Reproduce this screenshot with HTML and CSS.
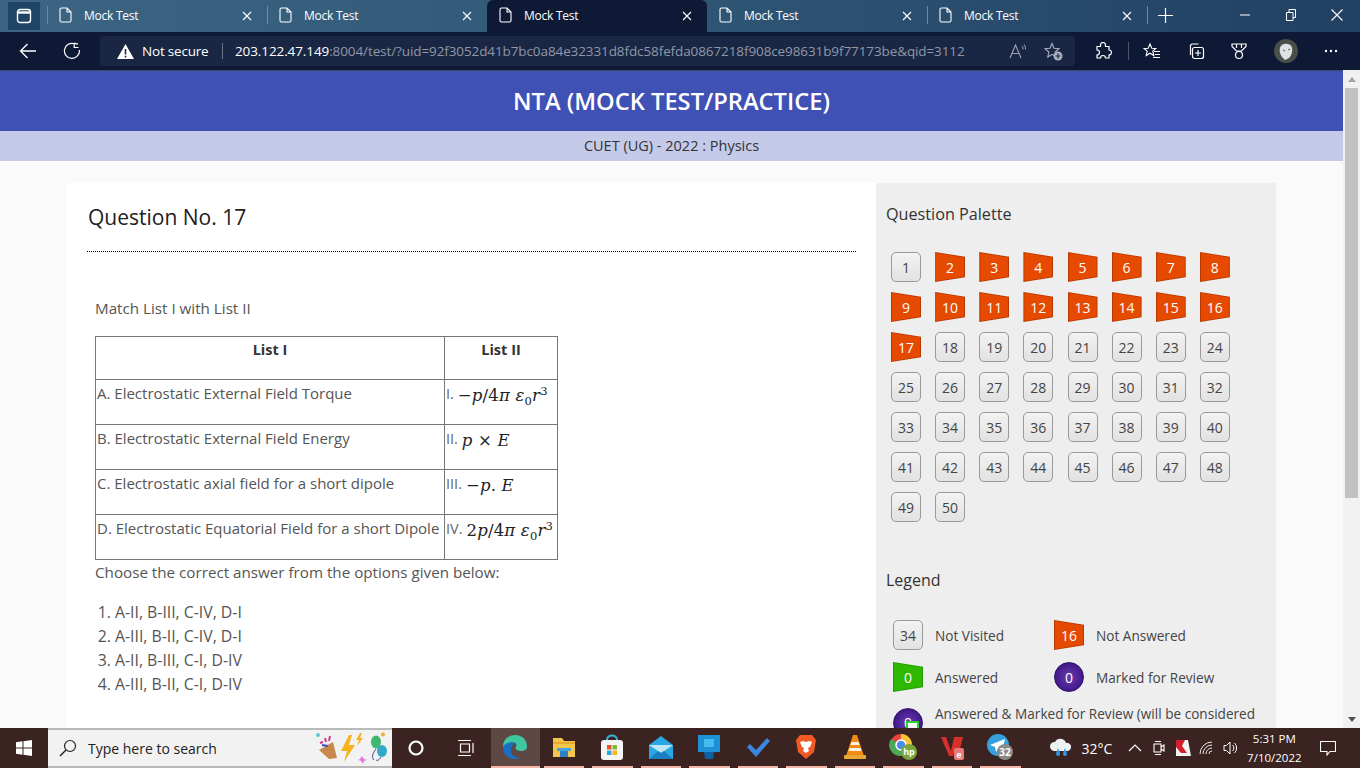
FILE: index.html
```html
<!DOCTYPE html>
<html lang="en">
<head>
<meta charset="utf-8">
<title>Mock Test</title>
<link rel="stylesheet" href="styles.css">
</head>
<body>
<div class="window">
  <div class="tabstrip">
    <div class="tab-btn"><svg width="16" height="16" viewBox="0 0 16 16"><rect x="1.5" y="1.5" width="13" height="13" rx="2.5" fill="none" stroke="#fff" stroke-width="1.4"/><path d="M1.5 4.5h13" stroke="#fff" stroke-width="2.4"/></svg></div>
    <div class="tab">
      <svg class="doc" width="13" height="16" viewBox="0 0 13 16"><path d="M1 2.5a1.5 1.5 0 0 1 1.5-1.5H8l4 4v8.500a1.500 1.500 0 0 1-1.500 1.500h-8A1.500 1.500 0 0 1 1 13.500zM8 1v4h4" fill="none" stroke="#fff" stroke-width="1.100"/></svg>
      <span class="tab-title">Mock Test</span>
      <svg class="close" width="10" height="10" viewBox="0 0 10 10"><path d="M1 1l8 8M9 1l-8 8" stroke="#fff" stroke-width="1.100"/></svg>
    </div>
    <div class="tab">
      <svg class="doc" width="13" height="16" viewBox="0 0 13 16"><path d="M1 2.5a1.5 1.5 0 0 1 1.5-1.5H8l4 4v8.500a1.500 1.500 0 0 1-1.500 1.500h-8A1.500 1.500 0 0 1 1 13.500zM8 1v4h4" fill="none" stroke="#fff" stroke-width="1.100"/></svg>
      <span class="tab-title">Mock Test</span>
      <svg class="close" width="10" height="10" viewBox="0 0 10 10"><path d="M1 1l8 8M9 1l-8 8" stroke="#fff" stroke-width="1.100"/></svg>
    </div>
    <div class="tab tab-active">
      <svg class="doc" width="13" height="16" viewBox="0 0 13 16"><path d="M1 2.5a1.5 1.5 0 0 1 1.5-1.5H8l4 4v8.500a1.500 1.500 0 0 1-1.500 1.500h-8A1.500 1.500 0 0 1 1 13.500zM8 1v4h4" fill="none" stroke="#fff" stroke-width="1.100"/></svg>
      <span class="tab-title">Mock Test</span>
      <svg class="close" width="10" height="10" viewBox="0 0 10 10"><path d="M1 1l8 8M9 1l-8 8" stroke="#fff" stroke-width="1.100"/></svg>
    </div>
    <div class="tab tab-nosep">
      <svg class="doc" width="13" height="16" viewBox="0 0 13 16"><path d="M1 2.5a1.5 1.5 0 0 1 1.5-1.5H8l4 4v8.500a1.500 1.500 0 0 1-1.500 1.500h-8A1.500 1.500 0 0 1 1 13.500zM8 1v4h4" fill="none" stroke="#fff" stroke-width="1.100"/></svg>
      <span class="tab-title">Mock Test</span>
      <svg class="close" width="10" height="10" viewBox="0 0 10 10"><path d="M1 1l8 8M9 1l-8 8" stroke="#fff" stroke-width="1.100"/></svg>
    </div>
    <div class="tab">
      <svg class="doc" width="13" height="16" viewBox="0 0 13 16"><path d="M1 2.5a1.5 1.5 0 0 1 1.5-1.5H8l4 4v8.500a1.500 1.500 0 0 1-1.500 1.500h-8A1.500 1.500 0 0 1 1 13.500zM8 1v4h4" fill="none" stroke="#fff" stroke-width="1.100"/></svg>
      <span class="tab-title">Mock Test</span>
      <svg class="close" width="10" height="10" viewBox="0 0 10 10"><path d="M1 1l8 8M9 1l-8 8" stroke="#fff" stroke-width="1.100"/></svg>
    </div>
    <div class="new-tab"><svg width="15" height="15" viewBox="0 0 15 15"><path d="M7.500 0v15M0 7.500h15" stroke="#fff" stroke-width="1.200"/></svg></div>
    <div class="win-controls">
      <svg width="10" height="10" viewBox="0 0 10 10"><path d="M0 5h10" stroke="#fff" stroke-width="1"/></svg>
      <svg width="10" height="12" viewBox="0 0 10 12"><path d="M.5 3.500h6.500v8H.5zM3 3.500V.5h6.500v8H7" fill="none" stroke="#fff" stroke-width="1"/></svg>
      <svg width="12" height="12" viewBox="0 0 12 12"><path d="M.5.5l11 11M11.500.5l-11 11" stroke="#fff" stroke-width="1.100"/></svg>
    </div>
  </div>

  <div class="toolbar">
    <div class="nav-btn"><svg width="18" height="16" viewBox="0 0 18 16"><path d="M17 8H1.500M8.500 1l-7 7 7 7" fill="none" stroke="#fff" stroke-width="1.300"/></svg></div>
    <div class="nav-btn nav-reload"><svg width="18" height="18" viewBox="0 0 18 18"><path d="M11.500 1.800A7.500 7.500 0 1 0 16.400 8M11.200 1.200l3.800 1M11.200 1.200v4.300h4.300" fill="none" stroke="#fff" stroke-width="1.200"/></svg></div>
    <div class="address">
      <svg class="warn" width="17" height="15" viewBox="0 0 17 15"><path d="M8.500 0L17 15H0z" fill="#fff"/><path d="M8.500 5v5.500M8.500 11.800v1.700" stroke="#1a2744" stroke-width="1.600"/></svg>
      <span class="secure">Not secure</span>
      <span class="addr-sep"></span>
      <span class="url"><span class="url-host">203.122.47.149</span>:8004/test/?uid=92f3052d41b7bc0a84e32331d8fdc58fefda0867218f908ce98631b9f77173be&amp;qid=3112</span>
      <svg class="addr-read" width="18" height="16" viewBox="0 0 18 16"><path d="M1 15L6.500 2 12 15M3 10.500h7" fill="none" stroke="#9aa3b2" stroke-width="1.100"/><path d="M13 3a4 4 0 0 1 1 3.500M15 1.500a6 6 0 0 1 1.500 5" fill="none" stroke="#9aa3b2"/></svg>
      <svg class="addr-fav" width="19" height="19" viewBox="0 0 19 19"><path d="M8 1.500l2 4.700 5 .5-3.800 3.300 1 5-4.200-2.600L3.800 15l1-5L1 6.700l5-.5z" fill="none" stroke="#a9b1be" stroke-width="1.100"/><circle cx="14" cy="14" r="4.500" fill="#a9b1be"/><path d="M14 11.500v5M11.500 14h5" stroke="#1a2744" stroke-width="1.200"/></svg>
    </div>
    <div class="tools">
      <svg class="tool-ext" width="18" height="18" viewBox="0 0 18 18"><path d="M6.500 3a2.500 2.500 0 0 1 5 0v1.500H15V8a2.500 2.500 0 0 1 0 5v3h-3.500a2.500 2.500 0 0 0-5 0H3v-3a2.500 2.500 0 0 0 0-5V4.500h3.500z" fill="none" stroke="#fff" stroke-width="1.200"/></svg>
      <span class="tool-sep"></span>
      <svg class="tool-fav" width="18" height="18" viewBox="0 0 18 18"><path d="M7 2l1.800 4.200 4 .3-3 2.700 1 4.300L7 11.200 3.200 13.500l1-4.300-3-2.700 4-.3zM11 9.500h6M12 12.500h5M10 15.500h7" fill="none" stroke="#fff" stroke-width="1.100"/></svg>
      <svg class="tool-coll" width="18" height="18" viewBox="0 0 18 18"><rect x="5.500" y="5.500" width="11" height="11" rx="2" fill="none" stroke="#fff" stroke-width="1.200"/><path d="M11 8v6M8 11h6M3.500 13V4.500a2 2 0 0 1 2-2.500h6" fill="none" stroke="#fff" stroke-width="1.200"/></svg>
      <svg class="tool-medal" width="18" height="18" viewBox="0 0 18 18"><path d="M2 2h14v2.500L11.500 9h-5L2 4.500zM6.500 2v4M11.500 2v4" fill="none" stroke="#fff" stroke-width="1.200"/><circle cx="9" cy="13" r="3.500" fill="none" stroke="#fff" stroke-width="1.200"/></svg>
      <svg class="tool-avatar" width="24" height="24" viewBox="0 0 24 24"><circle cx="12" cy="12" r="12" fill="#4a4f4a"/><path d="M6 9c1-5 11-6 12 0 1 4-1 8-3 10l-4 2-3-3C6 15 5 12 6 9z" fill="#dfe2e4"/><path d="M9 11l2 1M14 11l2-1" stroke="#555" stroke-width="1"/></svg>
      <svg class="tool-more" width="14" height="4" viewBox="0 0 14 4"><circle cx="2" cy="2" r="1.200" fill="#fff"/><circle cx="7" cy="2" r="1.200" fill="#fff"/><circle cx="12" cy="2" r="1.200" fill="#fff"/></svg>
    </div>
  </div>

  <div class="viewport">
    <div class="page">
      <header class="page-head">NTA (MOCK TEST/PRACTICE)</header>
      <div class="page-sub">CUET (UG) - 2022 : Physics</div>
      <main class="sheet">
        <section class="question">
          <h2 class="q-title">Question No. 17</h2>
          <div class="q-body">
            <p class="q-intro">Match List I with List II</p>
            <table class="q-table">
              <tr class="row-head"><th class="col-a">List I</th><th class="col-b">List II</th></tr>
              <tr><td>A. Electrostatic External Field Torque</td><td><span class="num">I.</span> <span class="math">−<i>p</i>/4<i>π ε</i><sub>0</sub><i>r</i><sup>3</sup></span></td></tr>
              <tr><td>B. Electrostatic External Field Energy</td><td><span class="num">II.</span> <span class="math"><i>p</i> × <i>E</i></span></td></tr>
              <tr><td>C. Electrostatic axial field for a short dipole</td><td><span class="num">III.</span> <span class="math">−<i>p</i>. <i>E</i></span></td></tr>
              <tr><td>D. Electrostatic Equatorial Field for a short Dipole</td><td><span class="num">IV.</span> <span class="math">2<i>p</i>/4<i>π ε</i><sub>0</sub><i>r</i><sup>3</sup></span></td></tr>
            </table>
            <p class="q-choose">Choose the correct answer from the options given below:</p>
            <ol class="q-options">
              <li>A-II, B-III, C-IV, D-I</li>
              <li>A-III, B-II, C-IV, D-I</li>
              <li>A-II, B-III, C-I, D-IV</li>
              <li>A-III, B-II, C-I, D-IV</li>
            </ol>
          </div>
        </section>
        <aside class="panel">
          <h3 class="panel-title">Question Palette</h3>
          <div class="palette">
            <span class="pill">1</span>
            <span class="flag">2</span><span class="flag">3</span><span class="flag">4</span><span class="flag">5</span><span class="flag">6</span><span class="flag">7</span><span class="flag">8</span>
            <span class="flag">9</span><span class="flag">10</span><span class="flag">11</span><span class="flag">12</span><span class="flag">13</span><span class="flag">14</span><span class="flag">15</span><span class="flag">16</span>
            <span class="flag">17</span><span class="pill">18</span><span class="pill">19</span><span class="pill">20</span><span class="pill">21</span><span class="pill">22</span><span class="pill">23</span><span class="pill">24</span>
            <span class="pill">25</span><span class="pill">26</span><span class="pill">27</span><span class="pill">28</span><span class="pill">29</span><span class="pill">30</span><span class="pill">31</span><span class="pill">32</span>
            <span class="pill">33</span><span class="pill">34</span><span class="pill">35</span><span class="pill">36</span><span class="pill">37</span><span class="pill">38</span><span class="pill">39</span><span class="pill">40</span>
            <span class="pill">41</span><span class="pill">42</span><span class="pill">43</span><span class="pill">44</span><span class="pill">45</span><span class="pill">46</span><span class="pill">47</span><span class="pill">48</span>
            <span class="pill">49</span><span class="pill">50</span>
          </div>
          <h3 class="legend-title">Legend</h3>
          <div class="legend">
            <div class="legend-item"><span class="pill">34</span><span>Not Visited</span></div>
            <div class="legend-item"><span class="flag">16</span><span>Not Answered</span></div>
            <div class="legend-item"><span class="flag flag-green">0</span><span>Answered</span></div>
            <div class="legend-item"><span class="ball">0</span><span>Marked for Review</span></div>
            <div class="legend-item legend-wide"><span class="ball ball-tick">0</span><span>Answered &amp; Marked for Review (will be considered for evaluation)</span></div>
          </div>
        </aside>
      </main>
    </div>
    <div class="scrollbar">
      <div class="sb-up"></div>
      <div class="sb-thumb"></div>
      <div class="sb-spacer"></div>
      <div class="sb-down"></div>
    </div>
  </div>

  <div class="taskbar">
    <div class="start"><svg width="16" height="16" viewBox="0 0 16 16"><path d="M0 2.300L6.500 1.300v6.300H0zM7.500 1.200L16 0v7.600H7.500zM0 8.500h6.500v6.300L0 13.800zM7.500 8.500H16V16l-8.500-1.200z" fill="#fff"/></svg></div>
    <div class="search">
      <svg width="18" height="18" viewBox="0 0 18 18"><circle cx="11" cy="7" r="5.500" fill="none" stroke="#222" stroke-width="1.200"/><path d="M7 11l-6 6" stroke="#222" stroke-width="1.400"/></svg>
      <span class="search-text">Type here to search</span>
      <svg class="search-art" width="72" height="32" viewBox="0 0 72 32"><circle cx="2" cy="3" r="2" fill="#62c6d6"/><path d="M3 18l14-8 4 16-8 1z" fill="#c9894e"/><path d="M4 11l3-1M9 6l1 4M14 4l-1 5" stroke="#d63d8a" stroke-width="2"/><path d="M6 13l6 1" stroke="#3a4fc0" stroke-width="2"/><path d="M33 3L25 19h6l-3 11 11-17h-6l3-10z" fill="#f7b21d"/><path d="M45 5l-4 7h3l-2 6 6-8h-3l2-5z" fill="#f7b21d" transform="translate(-1 -4)"/><path d="M44 27l2-3 2 3 3 1-3 1-1 3-2-3-3-1z" fill="#e37be0"/><ellipse cx="60" cy="10" rx="5" ry="6.500" fill="#3fb76f"/><ellipse cx="66" cy="19" rx="5" ry="6" fill="#33a9c9"/><path d="M60 17c-3 4-5 8-2 11M65 25c-2 3-3 4-5 3" fill="none" stroke="#3d4a8a"/><circle cx="67" cy="2.500" r="2" fill="#f2a93b"/></svg>
    </div>
    <div class="tb-slot"><svg width="16" height="16" viewBox="0 0 16 16"><circle cx="8" cy="8" r="6.500" fill="none" stroke="#fff" stroke-width="2.200"/></svg></div>
    <div class="tb-slot tb-view"><svg width="18" height="18" viewBox="0 0 18 18"><path d="M1 1.500h13M1 16.500h13M3.500 5h9v8h-9zM16 4v10" fill="none" stroke="#fff" stroke-width="1.200"/></svg></div>
    <div class="tb-app tb-active"><svg width="26" height="26" viewBox="0 0 26 26"><path d="M1 13C1 5 7 1 13.500 1 20 1 25 6 25 12.500c0 3-2.500 4.500-5.500 4.500-3 0-6-1-6-3 0-1 .8-1.700.8-3C14.300 9 12 8 10 8.500 5 9.500 1 16 1 13z" fill="#3ec8a0"/><path d="M1 13c-.5 7 5.500 12 12 12 2 0 4-.5 5.500-1.500-3 .5-7-.5-8.500-3.500-2-3.500-.5-8.500 3-10.500-2-2-6-1.500-8.500 0C2.500 11 1.200 12 1 13z" fill="#1a6fc4"/></svg></div>
    <div class="tb-app"><svg width="24" height="22" viewBox="0 0 24 22"><path d="M1 2h9l2 3h11v16H1z" fill="#f3c64c"/><rect x="1" y="6" width="22" height="2" fill="#e8a92c"/><rect x="8" y="14" width="8" height="7" fill="#2d80c8"/><rect x="5" y="12" width="14" height="3" fill="#4aa2e0"/></svg></div>
    <div class="tb-app"><svg width="24" height="26" viewBox="0 0 24 26"><path d="M7 6c0-6 10-6 10 0" fill="none" stroke="#39b0dc" stroke-width="2"/><rect x="1" y="6" width="22" height="20" rx="3" fill="#f4f4f4"/><rect x="7" y="11" width="4.500" height="4.500" fill="#e8532b"/><rect x="12.500" y="11" width="4.500" height="4.500" fill="#7ebb3c"/><rect x="7" y="16.500" width="4.500" height="4.500" fill="#2da3e0"/><rect x="12.500" y="16.500" width="4.500" height="4.500" fill="#f5b81f"/></svg></div>
    <div class="tb-app"><svg width="24" height="24" viewBox="0 0 24 24"><path d="M0 10L12 1l12 9v14H0z" fill="#2aa8e3"/><path d="M0 10l12 8 12-8" fill="#bfe7f8"/><path d="M0 24l9-8 3 2 3-2 9 8z" fill="#1a7fc0"/></svg></div>
    <div class="tb-app"><svg width="24" height="26" viewBox="0 0 24 26"><rect x="1" y="1" width="22" height="17" fill="#1f8fd6"/><rect x="7" y="5" width="10" height="8" fill="#43bdf0"/><path d="M7 18h10l-1 7H8z" fill="#0e5fa3"/></svg></div>
    <div class="tb-app"><svg width="24" height="20" viewBox="0 0 24 20"><path d="M1 10l3-3 6 6L21 1l3 3L10 20z" fill="#3a86e0"/></svg></div>
    <div class="tb-app"><svg width="22" height="26" viewBox="0 0 22 26"><path d="M5 1h12l4 5-2 12-8 7-8-7L1 6z" fill="#f15a22"/><path d="M5 8l3-1 3 1 3-1 3 1-2 5-2 1 1 3-3 2-3-2 1-3-2-1z" fill="#fff"/></svg></div>
    <div class="tb-app"><svg width="24" height="26" viewBox="0 0 24 26"><path d="M10 1h4l7 21H3z" fill="#f08a12"/><path d="M8.500 8h7l1 3h-9zM6.500 14h11l1 3h-13z" fill="#f6f1e7"/><rect x="1" y="21" width="22" height="4" rx="1" fill="#e8a838"/></svg></div>
    <div class="tb-app"><svg width="28" height="28" viewBox="0 0 28 28"><circle cx="12" cy="12" r="11" fill="#e5483a"/><path d="M12 12L2 6A11 11 0 0 0 12 23z" fill="#4aa957"/><path d="M12 1a11 11 0 0 1 11 11H12z" fill="#f5c431"/><circle cx="12" cy="12" r="5" fill="#4c8bf0" stroke="#fff" stroke-width="1.500"/><circle cx="20" cy="19" r="8" fill="#7aa53a"/><text class="hp" x="20" y="22" text-anchor="middle">hp</text></svg></div>
    <div class="tb-app"><svg width="24" height="26" viewBox="0 0 24 26"><path d="M1 3h5l5 14 3-14h9l-3 12-5 1-2 6H9z" fill="#d8312b"/><rect x="14" y="14" width="10" height="12" rx="2" fill="#e87a78"/><text class="v-e" x="19" y="24" text-anchor="middle">e</text></svg></div>
    <div class="tb-app"><svg width="28" height="28" viewBox="0 0 28 28"><circle cx="12" cy="12" r="11" fill="#37a0dc"/><path d="M4 12l15-6-3 13-4-3-2 3-1-5z" fill="#fff"/><circle cx="19" cy="19" r="8" fill="#8a8a8a"/><text class="tg" x="19" y="23" text-anchor="middle">32</text></svg></div>
    <div class="tray">
      <svg class="tray-cloud" width="24" height="22" viewBox="0 0 24 22"><path d="M5 14a4.500 4.500 0 0 1 1-9 6 6 0 0 1 11 1 4 4 0 0 1 2 8z" fill="#eef1f4"/><path d="M9 11c-1 3-2 4-2 6a2 2 0 0 0 4 0c0-2-1-3-2-6zM16 11c-1 3-2 4-2 6a2 2 0 0 0 4 0c0-2-1-3-2-6z" fill="#3596e0"/></svg>
      <span class="temp">32°C</span>
      <svg class="tray-chev" width="14" height="8" viewBox="0 0 14 8"><path d="M1 7l6-6 6 6" fill="none" stroke="#fff" stroke-width="1.200"/></svg>
      <svg class="tray-meet" width="12" height="16" viewBox="0 0 12 16"><path d="M1 4h7v8H1zM8 7l3-2v6l-3-2M2 1.500h6M2 14.500h6" fill="none" stroke="#fff" stroke-width="1.100"/></svg>
      <svg class="tray-kav" width="15" height="16" viewBox="0 0 15 16"><path d="M0 0h12l3 16H0z" fill="#f4f4f4"/><path d="M0 0h9l-3 6 5 7H5L0 7z" fill="#d41f2c"/></svg>
      <svg class="tray-wifi" width="16" height="14" viewBox="0 0 16 14"><path d="M1 13a12 12 0 0 1 12-12M4 13a9 9 0 0 1 9-9M7 13a6 6 0 0 1 6-6M10 13a3 3 0 0 1 3-3" fill="none" stroke="#fff" stroke-width=".9"/></svg>
      <svg class="tray-vol" width="16" height="16" viewBox="0 0 16 16"><path d="M1 5.500h2.500L7 2v12l-3.500-3.500H1zM9.500 5a4 4 0 0 1 0 6M11.500 3a7 7 0 0 1 0 10" fill="none" stroke="#fff" stroke-width="1"/></svg>
      <div class="clock"><span>5:31 PM</span><span>7/10/2022</span></div>
      <svg class="tray-note" width="16" height="15" viewBox="0 0 16 15"><path d="M.5.5h15v10H10L7 14v-3.500H.5z" fill="none" stroke="#fff" stroke-width="1.100"/></svg>
    </div>
  </div>
</div>
</body>
</html>
```
FILE: styles.css
```css
* { box-sizing: border-box; }
html, body { margin: 0; height: 100%; overflow: hidden; }
body { font-family: "Open Sans", "Noto Sans", sans-serif; color: #444; }
h2, h3, p, ol { margin: 0; font-weight: 400; }
svg { display: block; flex: none; }

.window { display: flex; flex-direction: column; height: 768px; width: 1360px; }

/* tab strip */
.tabstrip { height: 32px; display: flex; align-items: stretch; padding-left: 8px; background: linear-gradient(90deg, #3c6584 0%, #2f5675 50%, #224062 100%); color: #fff; }
.tab-btn { width: 32px; height: 28px; margin: 2px 7px 0 0; background: #1f4466; display: flex; align-items: center; justify-content: center; }
.tab { width: 220px; position: relative; display: flex; align-items: center; padding-left: 12px; }
.tab::before { content: ""; position: absolute; left: 0; top: 6px; bottom: 8px; width: 1px; background: #6c8aa2; }
.tab-active { background: #0e1a35; border-radius: 6px 6px 0 0; }
.tab-active::before, .tab-nosep::before { display: none; }
.tab .doc { margin-right: 12px; margin-top: -2px; }
.tab-title { font-size: 12px; flex: 1; margin-top: -2px; letter-spacing: -.25px; }
.tab .close { margin-right: 15px; margin-top: -1px; }
.new-tab { width: 37px; position: relative; display: flex; align-items: center; justify-content: center; margin-top: -1px; }
.new-tab::before { content: ""; position: absolute; left: 0; top: 7px; bottom: 8px; width: 1px; background: #6c8aa2; }
.win-controls { flex: 1; display: flex; align-items: center; justify-content: space-between; padding: 0 17px 2px 56px; }

/* toolbar */
.toolbar { height: 38px; background: #0e1a35; display: flex; align-items: center; }
.nav-btn { width: 36px; display: flex; justify-content: center; margin-left: 10px; margin-right: 4px; }
.nav-reload { width: 50px; justify-content: center; margin: 0; padding-right: 6px; }
.address { width: 975px; height: 30px; background: #1a2744; border-radius: 4px; display: flex; align-items: center; padding-left: 17px; }
.warn { margin-right: 8px; }
.secure { color: #fff; font-size: 13.500px; width: 72px; white-space: nowrap; letter-spacing: -.2px; }
.addr-sep { width: 1px; height: 16px; background: #6b7588; margin: 0 12px 0 8px; }
.url { font-size: 13.500px; color: #8f97a6; white-space: nowrap; letter-spacing: -.1px; flex: 1; }
.url-host { color: #fff; }
.addr-read { margin-right: 17px; }
.addr-fav { margin-right: 12px; }
.tools { flex: 1; display: flex; align-items: center; padding-left: 19px; }
.tool-sep { width: 1px; height: 18px; background: #4a5570; margin: 0 14px 0 16px; }
.tool-coll { margin-left: 26px; }
.tool-medal { margin-left: 25px; }
.tool-avatar { margin-left: 26px; }
.tool-more { margin-left: 26px; }

/* viewport */
.viewport { flex: 1; display: flex; min-height: 0; }
.page { flex: 1; min-width: 0; background: #fafafa; overflow: hidden; border-top: 1px solid #3c4a68; }
.page-head { height: 60px; background: #3f51b5; color: #fff; font-size: 23.700px; font-weight: 600; display: flex; align-items: center; justify-content: center; }
.page-sub { height: 30px; padding-bottom: 2px; background: #c5cae9; color: #333; font-size: 14.500px; display: flex; align-items: center; justify-content: center; }
.sheet { display: flex; margin: 22px 67px 0; background: #fff; align-items: flex-start; }

.question { width: 809px; padding: 0 20px; flex: none; }
.q-title { font-size: 21px; line-height: 27px; color: #212121; height: 69px; padding-top: 21px; padding-left: 1px; border-bottom: 1px dotted #000; }
.q-body { padding: 46px 0 0 8px; font-size: 15.200px; line-height: 20px; }
.q-intro { color: #555; }
.q-table { border-collapse: collapse; border: 1px solid #222; margin-top: 18px; width: 462px; table-layout: fixed; color: #555; font-size: 15px; }
.q-table th, .q-table td { border: 1px solid #777; padding: 3px 1px 0; vertical-align: top; white-space: nowrap; height: 45px; text-align: left; font-weight: 400; }
.q-table .row-head th { height: 43px; text-align: center; font-weight: 700; color: #333; font-size: 14.500px; }
.col-a { width: 349px; }
.col-b { width: 113px; }
.num { font-size: 14.500px; color: #666; }
.math { font-family: "DejaVu Serif", "Liberation Serif", serif; font-size: 16.500px; color: #222; position: relative; top: 2px; letter-spacing: .2px; }
.math sub, .math sup { font-size: 11.500px; line-height: 0; }
.q-choose { margin-top: 2px; color: #555; }
.q-options { margin-top: 20px; padding-left: 20px; color: #555; font-size: 15.800px; }
.q-options li { height: 24px; line-height: 20px; }

/* side panel */
.panel { width: 400px; flex: none; background: #eee; padding: 0 10px; height: 700px; }
.panel-title { font-size: 16.200px; line-height: 22px; color: #333; padding-top: 20px; height: 69px; }
.palette { display: grid; grid-template-columns: repeat(8, 30px); column-gap: 14.140px; row-gap: 10px; margin-left: 5px; }
.pill { width: 30px; height: 30px; flex: none; display: flex; align-items: center; justify-content: center; border: 1.500px solid #999; border-radius: 5px; background: linear-gradient(#f2f2f2, #e2e2e2); font-size: 14px; color: #444; }
.flag { width: 30px; height: 30px; flex: none; position: relative; display: flex; align-items: center; justify-content: center; font-size: 14px; color: #fff; background: #b83a00; clip-path: polygon(0 0, 100% 16%, 100% 84%, 0 100%); z-index: 0; }
.flag::before { content: ""; position: absolute; inset: 1px; background: #e64a00; clip-path: polygon(0 0, 100% 16%, 100% 84%, 0 100%); z-index: -1; }
.flag-green { background: #1f9c00; }
.flag-green::before { background: #2eb800; }
.legend-title { font-size: 16px; line-height: 22px; color: #333; margin-top: 47px; }
.legend { display: grid; grid-template-columns: 161px 1fr; row-gap: 12px; margin: 29px 0 0 7px; font-size: 13.600px; color: #444; }
.legend-item { display: flex; align-items: center; gap: 12px; }
.legend-wide { grid-column: 1 / -1; align-items: flex-start; line-height: 20px; }
.ball { width: 30px; height: 30px; flex: none; border-radius: 50%; display: flex; align-items: center; justify-content: center; background: radial-gradient(circle at 50% 50%, #6a3bb0, #35107e 90%); border: 1px solid #2c0f6a; color: #fff; font-size: 14px; position: relative; }
.ball-tick { margin-top: 4px; }
.ball-tick::after { content: ""; position: absolute; right: 3px; bottom: 4px; width: 9px; height: 8px; border: 2px solid #2fd02f; background: #fff; }

/* scrollbar */
.scrollbar { width: 17px; background: #f1f1f1; display: flex; flex-direction: column; align-items: center; }
.sb-up { height: 18px; width: 17px; display: flex; flex: none; }
.sb-up::before { content: ""; margin: 7px auto 0; border: 4px solid transparent; border-top: 0; border-bottom: 5px solid #a3a3a3; height: 0; width: 0; }
.sb-thumb { width: 13px; height: 410px; background: #c1c1c1; flex: none; }
.sb-spacer { flex: 1; }
.sb-down { height: 17px; width: 17px; display: flex; flex: none; }
.sb-down::before { content: ""; margin: 6px auto 0; border: 4px solid transparent; border-bottom: 0; border-top: 5px solid #505050; height: 0; width: 0; }

/* taskbar */
.taskbar { height: 40px; background: #3a2320; display: flex; align-items: stretch; color: #fff; }
.start { width: 48px; display: flex; align-items: center; justify-content: center; }
.search { width: 344px; background: #f2f2f2; border-top: 2px solid #b9b9b9; border-bottom: 2px solid #b9b9b9; display: flex; align-items: center; padding-left: 11px; color: #222; }
.search-text { font-size: 14px; margin-left: 11px; flex: 1; }
.search-art { margin-right: 4px; }
.tb-slot { width: 48px; display: flex; align-items: center; justify-content: center; }
.tb-view { width: 51px; }
.tb-app { width: 48.500px; display: flex; align-items: center; justify-content: center; border-bottom: 2px solid transparent; position: relative; }
.tb-app::after { content: ""; position: absolute; left: 4px; right: 4px; bottom: -2px; height: 2px; background: #f4b6a6; }
.tb-active { background: #5e4843; }
.tb-active::after { left: 0; right: 0; }
.hp { font: 700 9px "Open Sans", sans-serif; fill: #fff; }
.v-e { font: 700 9px "Open Sans", sans-serif; fill: #fff; }
.tg { font: 700 10px "Open Sans", sans-serif; fill: #fff; }
.tray { flex: 1; display: flex; align-items: center; padding-left: 24px; }
.temp { font-size: 14px; margin-left: 9px; }
.tray-chev { margin-left: 16px; }
.tray-meet { margin-left: 11px; }
.tray-kav { margin-left: 10.500px; }
.tray-wifi { margin-left: 8.500px; }
.tray-vol { margin-left: 8px; }
.clock { display: flex; flex-direction: column; align-items: center; font-size: 11.500px; line-height: 19px; margin-left: 6px; width: 58px; }
.tray-note { margin-left: 17px; }
```
